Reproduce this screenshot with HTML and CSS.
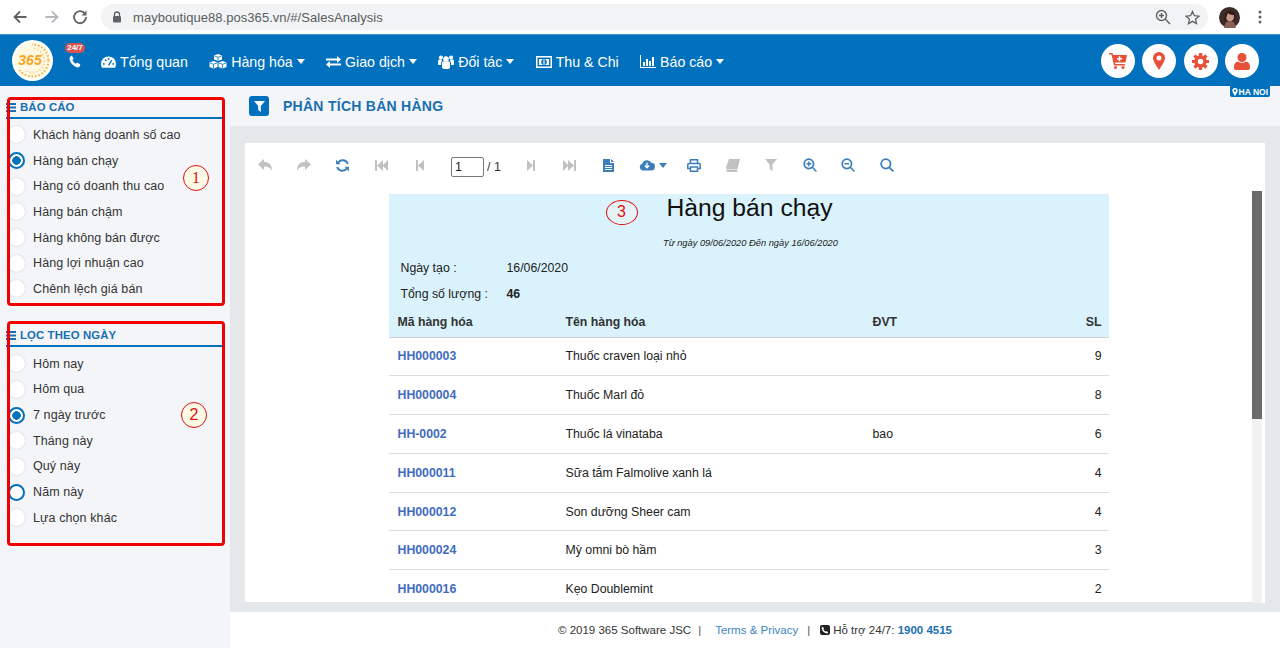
FILE: index.html
```html
<!DOCTYPE html>
<html>
<head>
<title>Phân tích bán hàng</title>
<link rel="stylesheet" href="styles.css">
</head>
<body>

<!-- browser chrome -->
<div class="browserBar">
  <svg class="chromeIcon" width="16" height="16" viewBox="0 0 16 16"><path d="M14.5 8H2.5M8 2.5 2.5 8 8 13.5" fill="none" stroke="#5f6368" stroke-width="1.8"/></svg>
  <svg class="chromeIcon forward" width="16" height="16" viewBox="0 0 16 16"><path d="M1.5 8h12M8 2.5 13.500 8 8 13.5" fill="none" stroke="#b4b7bb" stroke-width="1.8"/></svg>
  <svg class="chromeIcon reload" width="16" height="16" viewBox="0 0 16 16"><path d="M13.2 5.2A6 6 0 1 0 14 8" fill="none" stroke="#5f6368" stroke-width="1.8"/><path d="M14.5 1.500v5h-5z" fill="#5f6368"/></svg>
  <div class="omnibox">
    <svg width="10" height="12" viewBox="0 0 10 12"><path d="M2.500 5V3.500a2.500 2.500 0 0 1 5 0V5" fill="none" stroke="#5f6368" stroke-width="1.3"/><rect x="1" y="5" width="8" height="6.500" rx="1" fill="#5f6368"/></svg>
    <span class="url">mayboutique88.pos365.vn/#/SalesAnalysis</span>
    <span class="omniRight">
      <svg width="16" height="16" viewBox="0 0 16 16"><circle cx="6.500" cy="6.500" r="5" fill="none" stroke="#5f6368" stroke-width="1.4"/><path d="M10.300 10.300 15 15M6.500 4v5M4 6.500h5" stroke="#5f6368" stroke-width="1.4"/></svg>
      <svg width="15" height="15" viewBox="0 0 16 16"><path d="m8 1.600 2 4.500 4.900.5-3.700 3.200 1.100 4.800L8 12.100l-4.300 2.500 1.100-4.800L1.100 6.600 6 6.100z" fill="none" stroke="#5f6368" stroke-width="1.4"/></svg>
    </span>
  </div>
  <svg class="avatar" width="21" height="21" viewBox="0 0 21 21"><circle cx="10.500" cy="10.500" r="10.500" fill="#3d2b28"/><ellipse cx="11" cy="9.500" rx="4" ry="5" fill="#c99a86"/><path d="M5 21c1-6 3-7 6-7s5 2 6 7z" fill="#8a5f55"/><path d="M6 15c-1-7 1-11 5-11s6 3 5 10l-1-6c-3 0-5-1-6-2-1 2-2 5-3 9z" fill="#2a1a18"/></svg>
  <svg class="chromeDots" width="4" height="14" viewBox="0 0 4 14"><circle cx="2" cy="2" r="1.500" fill="#5f6368"/><circle cx="2" cy="7" r="1.500" fill="#5f6368"/><circle cx="2" cy="12" r="1.500" fill="#5f6368"/></svg>
</div>

<!-- app navbar -->
<div class="navbar">
  <div class="logo">
    <svg width="41" height="41" viewBox="0 0 41 41">
      <clipPath id="logoDots"><path d="M20 0h21v41H6V30h14z"/></clipPath>
      <circle cx="20.500" cy="20.500" r="20.500" fill="#fff"/>
      <circle cx="20.500" cy="20.500" r="18" fill="#fff8e2"/>
      <g clip-path="url(#logoDots)">
        <circle cx="20.500" cy="20.500" r="16" fill="none" stroke="#f3b13e" stroke-width="2" stroke-dasharray="1.500 2"/>
        <circle cx="20.500" cy="20.500" r="12" fill="none" stroke="#f5c766" stroke-width="1.500" stroke-dasharray="1.200 2.200"/>
      </g>
      <text x="18" y="25" text-anchor="middle" class="logoText">365</text>
    </svg>
  </div>
  <div class="hotline">
    <span class="badge">24/7</span>
    <svg width="12" height="13" viewBox="0 0 12 13"><path d="M2.800.6 4.700 3.800 3.400 5.100c.6 1.700 1.900 3 3.500 3.700l1.300-1.300 3.200 2-1 2.200c-.3.500-1 .8-1.700.7C4.500 11.700.9 7.800.5 3.600.4 2.900.7 2.200 1.200 1.800z" fill="#fff"/></svg>
  </div>
  <a class="navItem firstItem">
    <svg width="15" height="12" viewBox="0 0 16 12"><path d="M8 0a8 8 0 0 0-8 8c0 1.500.3 2.800 1 4h14c.7-1.200 1-2.500 1-4a8 8 0 0 0-8-8z" fill="#fff"/><circle cx="3" cy="8" r="1" fill="#0170bd"/><circle cx="5" cy="4" r="1" fill="#0170bd"/><circle cx="8" cy="2.800" r="1" fill="#0170bd"/><circle cx="13" cy="8" r="1" fill="#0170bd"/><path d="M8 9.500 11.500 4" stroke="#0170bd" stroke-width="1.400"/></svg>
    Tổng quan
  </a>
  <a class="navItem">
    <svg width="18" height="15" viewBox="0 0 18 15"><path d="M9 0l4 1.500v4L9 7 5 5.500v-4zM4.500 7l4 1.500v4.500l-4 1.500-4-1.500V8.500zM13.500 7l4 1.500v4.500l-4 1.500-4-1.500V8.500z" fill="#fff"/><path d="M5.500 2 9 3.300 12.500 2M1 9l3.500 1.300L8 9M10 9l3.500 1.300L17 9M9 3.300V6.500M4.500 10.300V14M13.500 10.300V14" fill="none" stroke="#0170bd" stroke-width=".8"/></svg>
    Hàng hóa<i class="caret"></i>
  </a>
  <a class="navItem">
    <svg width="15" height="12" viewBox="0 0 15 12"><path d="M0 2.500h11V0l4 3.500L11 7V4.500H0zM15 7.500H4V5L0 8.500 4 12V9.500h11z" fill="#fff"/></svg>
    Giao dịch<i class="caret"></i>
  </a>
  <a class="navItem">
    <svg width="16" height="14" viewBox="0 0 16 14"><circle cx="8" cy="4" r="2.800" fill="#fff"/><circle cx="2.900" cy="2.600" r="2" fill="#fff"/><circle cx="13.100" cy="2.600" r="2" fill="#fff"/><path d="M4 8c0-1 1-1.800 2-1.800h4c1 0 2 .8 2 1.800v4c0 1-.8 2-2 2H6c-1.200 0-2-1-2-2z" fill="#fff"/><path d="M0 6c0-1 .8-1.500 1.500-1.500h2c.3 1 .6 1.300 1 1.600-1 .3-1.500 1-1.500 2V10H1c-.6 0-1-.4-1-1zM16 6c0-1-.8-1.500-1.500-1.500h-2c-.3 1-.6 1.300-1 1.600 1 .3 1.500 1 1.500 2V10h2c.6 0 1-.4 1-1z" fill="#fff"/></svg>
    Đối tác<i class="caret"></i>
  </a>
  <a class="navItem">
    <svg width="16" height="12" viewBox="0 0 16 12"><path fill-rule="evenodd" d="M0 0h16v12H0zM1.500 1.500v9h13v-9z" fill="#fff"/><path d="M3 3h10v6H3z" fill="#fff"/><circle cx="8" cy="6" r="2.800" fill="#0170bd"/><rect x="7.400" y="4.200" width="1.200" height="3.600" fill="#fff"/></svg>
    Thu &amp; Chi
  </a>
  <a class="navItem">
    <svg width="16" height="13" viewBox="0 0 16 13"><path d="M0 0h1v12h15v1H0z" fill="#fff"/><path d="M3 7h2v4H3zM6 4h2v7H6zM9 6h2v5H9zM12 2h2v9h-2z" fill="#fff"/></svg>
    Báo cáo<i class="caret"></i>
  </a>

  <div class="navRight">
    <span class="roundBtn"><svg width="18" height="16" viewBox="0 0 18 16"><path d="M0 0h3.500l.6 2H18l-1.500 7.500H6l.4 1.500H16v1.500H5L2.500 1.500H0z" fill="#e8503a"/><circle cx="6.500" cy="14.500" r="1.500" fill="#e8503a"/><circle cx="14" cy="14.500" r="1.500" fill="#e8503a"/><path d="M10.500 3.200v5M8 5.700h5" stroke="#fff" stroke-width="1.500"/></svg></span>
    <span class="roundBtn"><svg width="12" height="18" viewBox="0 0 12 18"><path fill-rule="evenodd" d="M6 0a6 6 0 0 1 6 6c0 3-3.500 8-6 12C3.500 14 0 9 0 6a6 6 0 0 1 6-6zm0 3.500a2.500 2.500 0 1 0 0 5 2.500 2.500 0 0 0 0-5z" fill="#e8503a"/></svg></span>
    <span class="roundBtn"><svg width="17" height="17" viewBox="0 0 17 17"><circle cx="8.500" cy="8.500" r="4.500" fill="none" stroke="#e8503a" stroke-width="3.500"/><path d="M8.500 0v17M0 8.500h17M2.500 2.500l12 12M14.500 2.500l-12 12" stroke="#e8503a" stroke-width="3.200" stroke-dasharray="3.200 10.600 3.200"/></svg></span>
    <span class="roundBtn"><svg width="16" height="17" viewBox="0 0 16 17"><circle cx="8" cy="4.500" r="4.500" fill="#e8503a"/><path d="M0 13.500C0 10.500 2 9 4 8.500c1 .8 2.500 1.300 4 1.300s3-.5 4-1.300c2 .5 4 2 4 5V15c0 1-1 2-2 2H2c-1 0-2-1-2-2z" fill="#e8503a"/></svg></span>
  </div>
</div>

<div class="main">

  <!-- left filters -->
  <div class="sidebar">
    <div class="sideGroup">
      <div class="sideTitle"><svg width="10" height="9" viewBox="0 0 10 9"><path d="M0 0h10v2H0zM0 3.500h10v2H0zM0 7h10v2H0z" fill="#1a6fb0"/></svg>BÁO CÁO</div>
      <div class="radioList">
        <div class="radioRow"><i class="radio"></i>Khách hàng doanh số cao</div>
        <div class="radioRow"><i class="radio checked"></i>Hàng bán chạy</div>
        <div class="radioRow"><i class="radio"></i>Hàng có doanh thu cao</div>
        <div class="radioRow"><i class="radio"></i>Hàng bán chậm</div>
        <div class="radioRow"><i class="radio"></i>Hàng không bán được</div>
        <div class="radioRow"><i class="radio"></i>Hàng lợi nhuận cao</div>
        <div class="radioRow"><i class="radio"></i>Chênh lệch giá bán</div>
      </div>
      <div class="redBox first"></div>
      <span class="mark markOne">1</span>
    </div>

    <div class="sideGroup">
      <div class="sideTitle"><svg width="10" height="9" viewBox="0 0 10 9"><path d="M0 0h10v2H0zM0 3.500h10v2H0zM0 7h10v2H0z" fill="#1a6fb0"/></svg>LỌC THEO NGÀY</div>
      <div class="radioList">
        <div class="radioRow"><i class="radio"></i>Hôm nay</div>
        <div class="radioRow"><i class="radio"></i>Hôm qua</div>
        <div class="radioRow"><i class="radio checked"></i>7 ngày trước</div>
        <div class="radioRow"><i class="radio"></i>Tháng này</div>
        <div class="radioRow"><i class="radio"></i>Quý này</div>
        <div class="radioRow"><i class="radio ring"></i>Năm này</div>
        <div class="radioRow"><i class="radio"></i>Lựa chọn khác</div>
      </div>
      <div class="redBox second"></div>
      <span class="mark markTwo">2</span>
    </div>
  </div>

  <div class="content">
    <div class="pageTitle">
      <span class="titleIcon"><svg width="11" height="11" viewBox="0 0 11 11"><path d="M0 0h11L6.800 5v6L4.200 9V5z" fill="#fff"/></svg></span>
      <h1>PHÂN TÍCH BÁN HÀNG</h1>
      <span class="cityTag"><svg width="6" height="8" viewBox="0 0 12 18"><path fill-rule="evenodd" d="M6 0a6 6 0 0 1 6 6c0 3-3.500 8-6 12C3.500 14 0 9 0 6a6 6 0 0 1 6-6zm0 3.500a2.500 2.500 0 1 0 0 5 2.500 2.500 0 0 0 0-5z" fill="#fff"/></svg>HA NOI</span>
    </div>

    <div class="reportWrap">
      <div class="report">
        <!-- report viewer toolbar -->
        <div class="toolbar">
          <span class="tool off"><svg width="14" height="12" viewBox="0 0 14 12"><path d="M6 0v3c5 0 8 2.500 8 9-1.500-3.500-4-4.500-8-4.500V11L0 5.500z"/></svg></span>
          <span class="tool off"><svg width="14" height="12" viewBox="0 0 14 12"><path d="M8 0v3C3 3 0 5.500 0 12c1.500-3.500 4-4.500 8-4.500V11l6-5.500z"/></svg></span>
          <span class="tool"><svg width="13" height="13" viewBox="0 0 13 13"><path d="M11.800 5A5.500 5.500 0 0 0 2.300 3.300M1.200 8a5.500 5.500 0 0 0 9.500 1.700" fill="none" stroke="#3c7ebb" stroke-width="2"/><path d="M0 .8v4.500h4.500zM13 12.200V7.700H8.500z"/></svg></span>
          <span class="tool off"><svg width="13" height="11" viewBox="0 0 13 11"><path d="M0 0h2v11H0zM8 0v11L2 5.500zM13 0v11L7.500 5.500z"/></svg></span>
          <span class="tool off"><svg width="8" height="11" viewBox="0 0 8 11"><path d="M0 0h2v11H0zM8 0v11L2 5.500z"/></svg></span>
          <span class="pager"><input class="pageInput" value="1">/ 1</span>
          <span class="tool off"><svg width="8" height="11" viewBox="0 0 8 11"><path d="M8 0H6v11h2zM0 0v11l6-5.500z"/></svg></span>
          <span class="tool off"><svg width="13" height="11" viewBox="0 0 13 11"><path d="M13 0h-2v11h2zM5 0v11l6-5.500zM0 0v11l5.500-5.500z"/></svg></span>
          <span class="tool"><svg width="11" height="13" viewBox="0 0 11 13"><path fill-rule="evenodd" d="M0 0h7v4h4v9H0zM2 6v1h7V6zm0 2v1h7V8zm0 2v1h7v-1zM8 0l3 3H8z"/></svg></span>
          <span class="tool wide"><svg width="16" height="12" viewBox="0 0 14 11"><path d="M3.500 10.500A3.200 3.200 0 0 1 2.800 4.200 4.500 4.500 0 0 1 11 3.500a3.500 3.500 0 0 1-.5 7z"/><path d="M7 3.500v4M5 6l2 2 2-2" fill="none" stroke="#fff" stroke-width="1.200"/></svg><i class="toolCaret"></i></span>
          <span class="tool"><svg width="14" height="13" viewBox="0 0 14 13"><path d="M3.500 4.500V.8h7v3.700M3.500 9.500H.8V5.500c0-.5.400-1 1-1h10.400c.6 0 1 .5 1 1v4h-2.700M3.500 8h7v4.200h-7z" fill="none" stroke="#3c7ebb" stroke-width="1.500"/></svg></span>
          <span class="tool off"><svg width="14" height="13" viewBox="0 0 14 13"><path d="M3 0h11l-2.500 10H1c-1 0-1-1-.8-2zM.5 10.500h10.700L11 13H1.500C.5 13 0 11.500.5 10.500z"/></svg></span>
          <span class="tool off"><svg width="12" height="12" viewBox="0 0 11 11"><path d="M0 0h11L6.800 5v6L4.200 9V5z"/></svg></span>
          <span class="tool"><svg width="14" height="14" viewBox="0 0 12 12"><circle cx="5" cy="5" r="4" fill="none" stroke="#3c7ebb" stroke-width="1.500"/><path d="M8 8l3.500 3.500M5 3v4M3 5h4" fill="none" stroke="#3c7ebb" stroke-width="1.300"/></svg></span>
          <span class="tool"><svg width="14" height="14" viewBox="0 0 12 12"><circle cx="5" cy="5" r="4" fill="none" stroke="#3c7ebb" stroke-width="1.500"/><path d="M8 8l3.500 3.500M3 5h4" fill="none" stroke="#3c7ebb" stroke-width="1.300"/></svg></span>
          <span class="tool"><svg width="14" height="14" viewBox="0 0 12 12"><circle cx="5" cy="5" r="4" fill="none" stroke="#3c7ebb" stroke-width="1.500"/><path d="M8 8l3.500 3.500" fill="none" stroke="#3c7ebb" stroke-width="1.500"/></svg></span>
        </div>

        <div class="reportBody">
          <div class="sheetArea">
            <div class="sheet">
              <div class="sheetHead">
                <div class="sheetTitle">Hàng bán chạy</div>
                <div class="sheetDates">Từ ngày 09/06/2020 Đến ngày 16/06/2020</div>
                <div class="metaRow"><span class="metaLabel">Ngày tạo :</span><span>16/06/2020</span></div>
                <div class="metaRow"><span class="metaLabel">Tổng số lượng :</span><b>46</b></div>
                <span class="mark markThree">3</span>
              </div>
              <table class="goods">
                <thead>
                  <tr><th class="colCode">Mã hàng hóa</th><th class="colName">Tên hàng hóa</th><th class="colUnit">ĐVT</th><th class="colQty">SL</th></tr>
                </thead>
                <tbody>
                  <tr><td><a>HH000003</a></td><td>Thuốc craven loại nhỏ</td><td></td><td class="colQty">9</td></tr>
                  <tr><td><a>HH000004</a></td><td>Thuốc Marl đỏ</td><td></td><td class="colQty">8</td></tr>
                  <tr><td><a>HH-0002</a></td><td>Thuốc lá vinataba</td><td>bao</td><td class="colQty">6</td></tr>
                  <tr><td><a>HH000011</a></td><td>Sữa tắm Falmolive xanh lá</td><td></td><td class="colQty">4</td></tr>
                  <tr><td><a>HH000012</a></td><td>Son dưỡng Sheer cam</td><td></td><td class="colQty">4</td></tr>
                  <tr><td><a>HH000024</a></td><td>Mỳ omni bò hầm</td><td></td><td class="colQty">3</td></tr>
                  <tr><td><a>HH000016</a></td><td>Kẹo Doublemint</td><td></td><td class="colQty">2</td></tr>
                </tbody>
              </table>
            </div>
          </div>
          <div class="scrollTrack"><div class="scrollThumb"></div></div>
        </div>
      </div>
    </div>

    <div class="footer">© 2019 365 Software JSC<span class="sep sepOne">|</span><a class="terms">Terms &amp; Privacy</a><span class="sep sepTwo">|</span><svg width="10" height="10" viewBox="0 0 10 10"><rect width="10" height="10" rx="2" fill="#222"/><path d="M2.800 1.800 4 3.500l-.7.800c.4 1 1.200 1.800 2.400 2.400l.8-.7 1.700 1.200-.6 1c-.2.300-.6.400-1 .3C4 7.900 2.100 6 1.600 3.500c-.1-.4 0-.8.300-1z" fill="#fff"/></svg>Hỗ trợ 24/7: <b class="hotNumber">1900 4515</b></div>
  </div>
</div>

</body>
</html>
```

FILE: styles.css
```css
:root {
  --blue: #0170bd;
  --title-blue: #1a6fb0;
  --side-bg: #f3f5f8;
  --content-bg: #e4e8eb;
  --tool-blue: #3c7ebb;
  --red: #f00000;
}

html, body {
  margin: 0;
  height: 648px;
  overflow: hidden;
}

body {
  display: flex;
  flex-direction: column;
  font-family: "Liberation Sans", Arial, sans-serif;
  font-size: 12px;
  color: #333333;
  background-color: #ffffff;
}

/* browser chrome */
.browserBar {
  height: 34px;
  flex-shrink: 0;
  display: flex;
  align-items: center;
  padding-left: 12px;
  box-sizing: border-box;
  background-color: #ffffff;
}

.chromeIcon {
  margin-right: 16px;
}

.chromeIcon.forward {
  margin-right: 12px;
}

.chromeIcon.reload {
  margin-right: 13px;
}

.omnibox {
  width: 1107px;
  height: 26px;
  padding: 0 8px 0 11px;
  box-sizing: border-box;
  display: flex;
  align-items: center;
  background-color: #f1f3f4;
  border-radius: 13px;
}

.url {
  margin-left: 11px;
  font-size: 13px;
  letter-spacing: 0.05px;
  color: #5a5d61;
}

.omniRight {
  margin-left: auto;
  display: flex;
  align-items: center;
  gap: 14px;
}

.avatar {
  margin-left: 11px;
}

.chromeDots {
  margin-left: 18px;
}

/* navbar */
.navbar {
  height: 52px;
  flex-shrink: 0;
  display: flex;
  align-items: center;
  padding-left: 12px;
  box-sizing: border-box;
  background-color: var(--blue);
  border-top: 1px solid #3f94cf;
  color: #ffffff;
}

.logo {
  width: 41px;
  height: 41px;
}

.logoText {
  font-size: 14px;
  font-weight: bold;
  font-style: italic;
  fill: #f5a623;
}

.hotline {
  position: relative;
  margin-left: 16px;
  margin-top: 2px;
  display: flex;
}

.badge {
  position: absolute;
  left: -4px;
  top: -12px;
  width: 20px;
  height: 10px;
  line-height: 10px;
  text-align: center;
  font-size: 8px;
  font-weight: bold;
  background-color: #d9534f;
  border-radius: 6px;
}

.navItem {
  display: flex;
  align-items: center;
  gap: 4px;
  margin-left: 21.3px;
  margin-top: 2px;
  font-size: 14.2px;
  white-space: nowrap;
}

.navItem.firstItem {
  margin-left: 20px;
}

.caret {
  width: 0;
  height: 0;
  border-left: 4px solid transparent;
  border-right: 4px solid transparent;
  border-top: 5px solid #ffffff;
}

.navRight {
  margin-left: auto;
  margin-right: 21px;
  margin-top: 1px;
  display: flex;
  gap: 7.5px;
}

.roundBtn {
  width: 34px;
  height: 34px;
  display: flex;
  align-items: center;
  justify-content: center;
  background-color: #ffffff;
  border-radius: 50%;
}

/* layout */
.main {
  flex: 1;
  display: flex;
  min-height: 0;
}

.sidebar {
  width: 230px;
  flex-shrink: 0;
  padding-top: 11px;
  box-sizing: border-box;
  background-color: var(--side-bg);
}

.sideGroup {
  position: relative;
  margin-left: 6px;
  margin-right: 8px;
}

.sideGroup + .sideGroup {
  margin-top: 23px;
}

.sideTitle {
  height: 19px;
  padding-top: 1px;
  line-height: 19px;
  display: flex;
  align-items: center;
  gap: 4px;
  font-weight: bold;
  font-size: 11.4px;
  letter-spacing: 0.1px;
  color: var(--title-blue);
  border-bottom: 2px solid var(--blue);
}

.radioList {
  padding-top: 3px;
}

.sideGroup + .sideGroup .radioList {
  padding-top: 4px;
}

.radioRow {
  height: 25.7px;
  display: flex;
  align-items: center;
  font-size: 12.5px;
  letter-spacing: 0.1px;
  color: #333333;
  white-space: nowrap;
}

.radio {
  width: 17px;
  height: 17px;
  margin: 0 8px 0 2px;
  flex-shrink: 0;
  box-sizing: border-box;
  background-color: #ffffff;
  border-radius: 50%;
  box-shadow: 0 0 2px rgba(0, 0, 0, 0.2);
}

.radio.checked {
  border: 2px solid var(--blue);
  background: radial-gradient(circle, var(--blue) 0 4px, #ffffff 4.5px);
  box-shadow: none;
}

.radio.ring {
  border: 2px solid var(--blue);
  box-shadow: none;
}

/* red annotations from the screenshot author */
.redBox {
  position: absolute;
  left: 1px;
  right: -3px;
  border: 3px solid var(--red);
  border-radius: 4px;
}

.redBox.first {
  top: 0;
  height: 209px;
  box-sizing: border-box;
}

.redBox.second {
  top: -4px;
  height: 225px;
  box-sizing: border-box;
}

.mark {
  position: absolute;
  width: 26px;
  height: 26px;
  box-sizing: border-box;
  line-height: 23px;
  text-align: center;
  font-size: 16px;
  color: #e01010;
  background-color: #fdfbe6;
  border: 1.5px solid #e01010;
  border-radius: 50%;
}

.markOne {
  left: 177px;
  top: 68px;
  font-family: "Liberation Serif", serif;
}

.markTwo {
  left: 175px;
  top: 77px;
}

.markThree {
  left: 217px;
  top: 6px;
  width: 32px;
  height: 25px;
  line-height: 22px;
  background-color: #e4f3f5;
}

/* page */
.content {
  flex: 1;
  min-width: 0;
  display: flex;
  flex-direction: column;
}

.pageTitle {
  position: relative;
  height: 40px;
  flex-shrink: 0;
  display: flex;
  align-items: center;
  padding-left: 19px;
  background-color: var(--side-bg);
}

.pageTitle h1 {
  margin: 0 0 0 14px;
  font-size: 14px;
  letter-spacing: 0.27px;
  color: var(--title-blue);
}

.titleIcon {
  width: 20px;
  height: 20px;
  display: flex;
  align-items: center;
  justify-content: center;
  background-color: var(--blue);
  border-radius: 3px;
}

.cityTag {
  position: absolute;
  right: 10px;
  top: 0;
  height: 11px;
  padding: 0 2px;
  display: flex;
  align-items: center;
  gap: 1px;
  font-size: 8.5px;
  font-weight: bold;
  color: #ffffff;
  background-color: var(--blue);
  border-radius: 0 0 2px 2px;
}

.reportWrap {
  flex: 1;
  min-height: 0;
  display: flex;
  padding: 17px 15px 9px;
  background-color: var(--content-bg);
}

.report {
  flex: 1;
  min-width: 0;
  display: flex;
  flex-direction: column;
  background-color: #ffffff;
}

.toolbar {
  height: 48px;
  flex-shrink: 0;
  display: flex;
  align-items: center;
  padding: 0 0 4px 1px;
  box-sizing: border-box;
}

.tool {
  width: 38.6px;
  display: flex;
  align-items: center;
  justify-content: center;
  gap: 4px;
}

.tool svg {
  fill: var(--tool-blue);
}

.tool.off svg {
  fill: #bfc1c3;
}

.tool.wide {
  width: 47px;
  padding-left: 3px;
  box-sizing: border-box;
}

.toolCaret {
  width: 0;
  height: 0;
  border-left: 4px solid transparent;
  border-right: 4px solid transparent;
  border-top: 5px solid var(--tool-blue);
}

.pager {
  width: 73px;
  margin-top: 4px;
  padding-left: 12px;
  box-sizing: border-box;
  display: flex;
  align-items: center;
  gap: 3px;
  white-space: pre;
  font-size: 12.5px;
}

.pageInput {
  width: 33px;
  height: 20px;
  padding: 0 0 0 3px;
  box-sizing: border-box;
  font-family: "Liberation Sans", Arial, sans-serif;
  font-size: 12.5px;
  color: #222222;
  border: 1px solid #777777;
  border-radius: 2px;
  background-color: #ffffff;
}

.reportBody {
  flex: 1;
  min-height: 0;
  display: flex;
  padding-right: 3px;
}

.sheetArea {
  flex: 1;
  min-width: 0;
  overflow: hidden;
  display: flex;
  justify-content: center;
  padding-top: 3px;
  border-bottom: 1px solid #e6e6e6;
}

.sheet {
  width: 720px;
}

.sheetHead {
  position: relative;
  height: 112px;
  padding-left: 12px;
  box-sizing: border-box;
  background-color: #d9f2fb;
  color: #222222;
}

.sheetTitle {
  margin-left: -10px;
  height: 30px;
  line-height: 28px;
  text-align: center;
  font-size: 24.7px;
  color: #111111;
}

.sheetDates {
  margin-left: -8px;
  height: 31px;
  line-height: 38px;
  text-align: center;
  font-size: 9.3px;
  font-style: italic;
}

.metaRow {
  height: 26px;
  display: flex;
  align-items: center;
  font-size: 12.3px;
}

.metaLabel {
  width: 106px;
  flex-shrink: 0;
}

.goods {
  width: 720px;
  table-layout: fixed;
  border-collapse: collapse;
  font-size: 12.3px;
  color: #222222;
}

.goods th {
  height: 31px;
  padding: 2px 8px 0 8px;
  text-align: left;
  font-weight: bold;
  color: #333333;
  background-color: #d9f2fb;
  border-bottom: 1px solid #cfd6da;
  box-sizing: border-box;
}

.goods td {
  height: 38.8px;
  padding: 0 7px 0 8px;
  box-sizing: border-box;
  border-bottom: 1px solid #dddddd;
}

.goods th:first-child,
.goods td:first-child {
  padding-left: 9px;
}

.goods a {
  font-weight: bold;
  color: #3f6cc0;
}

.colCode { width: 169px; }
.colName { width: 307px; }
.colUnit { width: 160px; }

.goods .colQty {
  text-align: right;
  padding-right: 7px;
}

.scrollTrack {
  width: 10px;
  flex-shrink: 0;
  background-color: #f1f1f1;
}

.scrollThumb {
  height: 228px;
  background-color: #6b6b6b;
}

/* footer */
.footer {
  height: 36px;
  flex-shrink: 0;
  line-height: 36px;
  text-align: center;
  white-space: nowrap;
  font-size: 11.5px;
  color: #333333;
  background-color: #ffffff;
}

.sep {
  color: #555555;
}

.sepOne {
  margin: 0 14px 0 7px;
}

.sepTwo {
  margin: 0 10px 0 9px;
}

.terms {
  color: #3a86bf;
}

.footer svg {
  margin-right: 3px;
  vertical-align: -1px;
}

.hotNumber {
  color: #1a6fb0;
}
```
